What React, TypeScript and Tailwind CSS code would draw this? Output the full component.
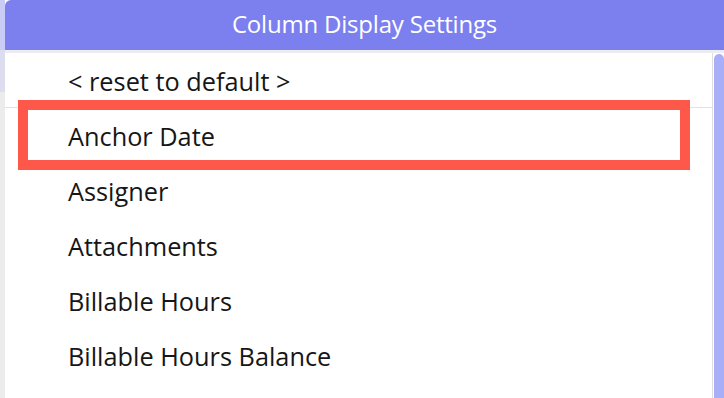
const columns = [
    'Anchor Date',
    'Assigner',
    'Attachments',
    'Billable Hours',
    'Billable Hours Balance',
];

export default function App() {
    return (
        <div className="relative w-[724px] h-[398px] flex overflow-hidden bg-white font-['Open_Sans','Noto_Sans',sans-serif]">
            {/* page behind the dialog */}
            <div className="w-[5px] flex flex-col">
                <div className="h-[50px] bg-[#c9ccf4]" />
                <div className="h-[42px] bg-[#dcdef0]" />
                <div className="flex-1 bg-[#ececec]" />
            </div>

            <div className="flex-1 flex flex-col min-w-0">
                <div className="h-[50px] rounded-tl-[6px] bg-[#7b80ee] flex items-center justify-center text-white text-[24px] pb-[2px] tracking-[-0.2px]">
                    Column Display Settings
                </div>
                <div className="h-[3px] bg-[#ececf2]" />

                <div className="flex-1 flex min-h-0">
                    <div className="flex-1 flex flex-col">
                        <div className="h-[55px] flex items-center pl-[63px] pt-[3px] text-[25.3px] text-[#161616] border-b border-[#e2e2e2]">
                            &lt; reset to default &gt;
                        </div>
                        {columns.map((c) => (
                            <div key={c} className="h-[55px] shrink-0 flex items-center pl-[63px] pt-[2px] text-[25.3px] text-[#161616]">
                                {c}
                            </div>
                        ))}
                    </div>

                    {/* scrollbar */}
                    <div className="w-[12px] flex border-l border-[#dedede] pl-[1px] pt-[1px]">
                        <div className="flex-1 rounded-t-[5px] bg-[#a9aef8]" />
                    </div>
                </div>
            </div>

            {/* highlight annotation */}
            <div className="absolute left-[18px] top-[100px] w-[672px] h-[70px] border-[10px] border-[#fe584b]" />
        </div>
    );
}
